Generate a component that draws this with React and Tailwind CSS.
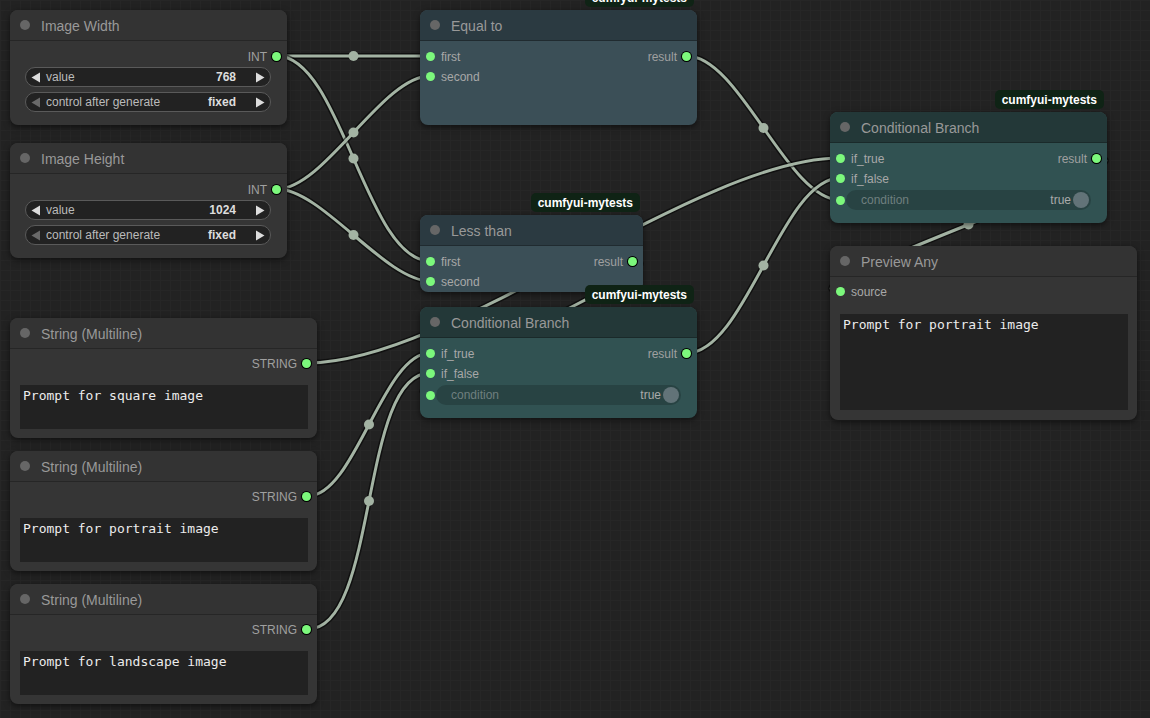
import React from 'react';

const LINK_COLOR = '#a3b3a3';

// litegraph-style spline: horizontal handles, a quarter of the distance long
function spline(a, b) {
  const k = Math.hypot(b[0] - a[0], b[1] - a[1]) * 0.25;
  const c1 = [a[0] + k, a[1]];
  const c2 = [b[0] - k, b[1]];
  const mid = [
    (a[0] + 3 * c1[0] + 3 * c2[0] + b[0]) / 8,
    (a[1] + 3 * c1[1] + 3 * c2[1] + b[1]) / 8,
  ];
  return { d: `M${a[0]} ${a[1]} C${c1[0]} ${c1[1]} ${c2[0]} ${c2[1]} ${b[0]} ${b[1]}`, mid };
}

const links = [
  [[277, 56], [430, 56]],
  [[277, 56], [430, 261]],
  [[277, 189], [430, 76]],
  [[277, 189], [430, 281]],
  [[687, 56], [840, 200]],
  [[687, 353], [840, 178]],
  [[308, 363], [840, 158]],
  [[633, 261], [430, 394]],
  [[308, 496], [430, 353]],
  [[308, 629], [430, 373]],
  [[1097, 158], [840, 291]],
];

const themes = {
  gray: { title: 'bg-[#333333]', body: 'bg-[#353535]', widget: 'bg-[#222222]' },
  slate: { title: 'bg-[#2b3a41]', body: 'bg-[#3b4f57]', widget: 'bg-[#2e3f46]' },
  teal: { title: 'bg-[#233838]', body: 'bg-[#315252]', widget: 'bg-[#284343]' },
};

function Wires() {
  return (
    <svg className="absolute inset-0" width="1150" height="718">
      {links.map(([a, b], i) => {
        const { d } = spline(a, b);
        return (
          <g key={i}>
            <path d={d} fill="none" stroke="#000" strokeOpacity="0.55" strokeWidth="6" />
            <path d={d} fill="none" stroke={LINK_COLOR} strokeWidth="3" />
          </g>
        );
      })}
      {links.map(([a, b], i) => {
        const { mid } = spline(a, b);
        return <circle key={i} cx={mid[0]} cy={mid[1]} r="5" fill={LINK_COLOR} />;
      })}
    </svg>
  );
}

function Dot({ out }) {
  return (
    <span
      className={`block w-[9px] h-[9px] rounded-full bg-[#7cf87c] shrink-0 ${out ? 'ring-1 ring-black' : ''}`}
    />
  );
}

function Badge() {
  return (
    <div className="absolute -top-[22px] right-[3px] h-[19px] px-[7px] rounded-[5px] bg-[#0f2315] text-white text-[12px] font-bold flex items-center">
      cumfyui-mytests
    </div>
  );
}

function Node({ pos, title, theme = 'gray', badge, children }) {
  const t = themes[theme];
  return (
    <div className={`absolute ${pos} ${t.body} rounded-lg shadow-[0_2px_6px_rgba(0,0,0,0.55)] flex flex-col`}>
      {badge && <Badge />}
      <div className={`h-[31px] shrink-0 ${t.title} rounded-t-lg border-b border-black/25 flex items-center`}>
        <span className="ml-[10px] w-[10px] h-[10px] rounded-full bg-[#666666]" />
        <span className="ml-[11px] mt-[2px] text-[14px] text-[#999999]">{title}</span>
      </div>
      {children}
    </div>
  );
}

function InSlot({ label }) {
  return (
    <div className="h-5 flex items-center pl-[6px]">
      <Dot />
      <span className="ml-[6px] mt-px text-[12px] text-[#a8a8a8]">{label}</span>
    </div>
  );
}

function OutSlot({ label }) {
  return (
    <div className="h-5 flex items-center justify-end pr-[6px]">
      <span className="mr-[5px] mt-px text-[12px] text-[#a0a0a0]">{label}</span>
      <Dot out />
    </div>
  );
}

function Arrow({ dir, dim }) {
  return (
    <svg width="10" height="11" viewBox="0 0 10 11" className="shrink-0">
      <path d={dir === 'left' ? 'M9 0.5 L9 10.5 L0.5 5.5 Z' : 'M1 0.5 L1 10.5 L9.5 5.5 Z'} fill={dim ? '#6a6a6a' : '#dddddd'} />
    </svg>
  );
}

function NumberWidget({ label, value, dimLeft, className }) {
  return (
    <div className={`ml-[15px] mr-[16px] h-5 rounded-full border border-[#5a5a5a] bg-[#222222] flex items-center px-[5px] text-[12px] ${className}`}>
      <Arrow dir="left" dim={dimLeft} />
      <span className="ml-[5px] text-[#bbbbbb]">{label}</span>
      <span className="ml-auto mr-[19px] text-[#dddddd] font-bold">{value}</span>
      <Arrow dir="right" />
    </div>
  );
}

function Toggle({ widget }) {
  return (
    <div className="h-5 mt-[2px] flex items-center pl-[6px]">
      <Dot />
      <div className={`ml-px mr-[16px] flex-1 h-5 rounded-full ${widget} flex items-center text-[12px]`}>
        <span className="ml-[15px] text-[#6f7f7f]">condition</span>
        <span className="ml-auto text-[#aaaaaa]">true</span>
        <span className="ml-[2px] mr-[2px] w-4 h-4 rounded-full bg-[#627378]" />
      </div>
    </div>
  );
}

function TextBox({ text, className }) {
  return (
    <div className={`ml-[10px] mr-[9px] bg-[#222222] px-[3px] pt-[3px] font-['DejaVu_Sans_Mono','Liberation_Mono',monospace] text-[13px] leading-[16px] text-[#ececec] whitespace-pre ${className}`}>
      {text}
    </div>
  );
}

function IntNode({ pos, title, value }) {
  return (
    <Node pos={pos} title={title}>
      <div className="pt-[5px] pb-[13px] flex flex-col">
        <OutSlot label="INT" />
        <NumberWidget label="value" value={value} className="mt-[1px]" />
        <NumberWidget label="control after generate" value="fixed" dimLeft className="mt-[5px]" />
      </div>
    </Node>
  );
}

function StringNode({ pos, text }) {
  return (
    <Node pos={pos} title="String (Multiline)">
      <div className="pt-[4px] flex flex-col">
        <OutSlot label="STRING" />
        <TextBox text={text} className="mt-[12px] h-[44px]" />
      </div>
    </Node>
  );
}

function BranchNode({ pos }) {
  return (
    <Node pos={pos} title="Conditional Branch" theme="teal" badge>
      <div className="pt-[5px] relative">
        <div className="absolute right-0 top-[5px] w-[80px]">
          <OutSlot label="result" />
        </div>
        <InSlot label="if_true" />
        <InSlot label="if_false" />
        <Toggle widget={themes.teal.widget} />
      </div>
    </Node>
  );
}

function CompareNode({ pos, title }) {
  return (
    <Node pos={pos} title={title} theme="slate" badge>
      <div className="pt-[5px] relative">
        <div className="absolute right-0 top-[5px] w-[80px]">
          <OutSlot label="result" />
        </div>
        <InSlot label="first" />
        <InSlot label="second" />
      </div>
    </Node>
  );
}

export default function App() {
  return (
    <div className="relative w-[1150px] h-[718px] overflow-hidden bg-[#222222] bg-[linear-gradient(to_right,#262626_1px,transparent_1px),linear-gradient(to_bottom,#262626_1px,transparent_1px)] bg-size-[10px_10px] font-['Liberation_Sans',Arial,sans-serif]">
      <Wires />

      <IntNode pos="left-[10px] top-[10px] w-[277px] h-[115px]" title="Image Width" value="768" />
      <IntNode pos="left-[10px] top-[143px] w-[277px] h-[115px]" title="Image Height" value="1024" />

      <StringNode pos="left-[10px] top-[318px] w-[307px] h-[120px]" text="Prompt for square image" />
      <StringNode pos="left-[10px] top-[451px] w-[307px] h-[120px]" text="Prompt for portrait image" />
      <StringNode pos="left-[10px] top-[584px] w-[307px] h-[120px]" text="Prompt for landscape image" />

      <CompareNode pos="left-[420px] top-[10px] w-[277px] h-[115px]" title="Equal to" />
      <CompareNode pos="left-[420px] top-[215px] w-[223px] h-[77px]" title="Less than" />
      <BranchNode pos="left-[420px] top-[307px] w-[277px] h-[111px]" />
      <BranchNode pos="left-[830px] top-[112px] w-[277px] h-[111px]" />

      <Node pos="left-[830px] top-[246px] w-[307px] h-[174px]" title="Preview Any">
        <div className="pt-[4px] flex flex-col">
          <InSlot label="source" />
          <TextBox text="Prompt for portrait image" className="mt-[13px] h-[96px]" />
        </div>
      </Node>
    </div>
  );
}
